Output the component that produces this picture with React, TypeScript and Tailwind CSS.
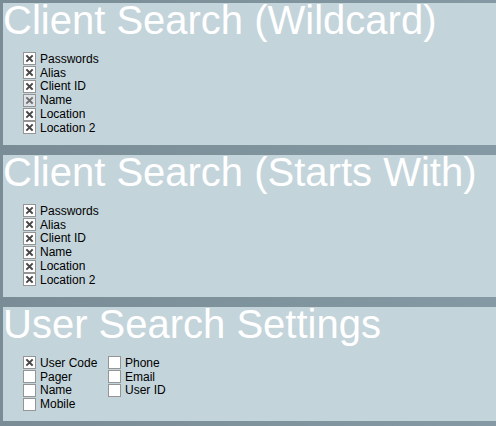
import React from 'react';

type Item = { label: string; checked: boolean; dim?: boolean };

function Box({ checked, dim }: { checked: boolean; dim?: boolean }) {
  return (
    <span
      className={`flex h-[13px] w-[13px] shrink-0 items-center justify-center border border-[#959595] ${
        dim ? 'bg-[#dfe4e7]' : 'bg-white'
      }`}
    >
      {checked && (
        <svg width="9" height="9" viewBox="0 0 9 9">
          <path
            d="M2 2 L7 7 M7 2 L2 7"
            stroke={dim ? '#707070' : '#474747'}
            strokeWidth="1.9"
            strokeLinecap="square"
          />
        </svg>
      )}
    </span>
  );
}

function Row({ item }: { item: Item }) {
  return (
    <label className="flex h-[13.8px] items-center gap-[4px]">
      <Box checked={item.checked} dim={item.dim} />
      <span className="text-[12px] leading-none text-black">{item.label}</span>
    </label>
  );
}

function Panel({ title, height, children }: { title: string; height: string; children: React.ReactNode }) {
  return (
    <section className={`${height} bg-[#c4d4db]`}>
      <h2 className="whitespace-nowrap text-[40px] leading-[34px] text-white">{title}</h2>
      <div className="ml-[20px] mt-[15px]">{children}</div>
    </section>
  );
}

const clientFields: Item[] = [
  { label: 'Passwords', checked: true },
  { label: 'Alias', checked: true },
  { label: 'Client ID', checked: true },
  { label: 'Name', checked: true },
  { label: 'Location', checked: true },
  { label: 'Location 2', checked: true },
];

const userCol1: Item[] = [
  { label: 'User Code', checked: true },
  { label: 'Pager', checked: false },
  { label: 'Name', checked: false },
  { label: 'Mobile', checked: false },
];

const userCol2: Item[] = [
  { label: 'Phone', checked: false },
  { label: 'Email', checked: false },
  { label: 'User ID', checked: false },
];

export default function App() {
  return (
    <div
      className="flex h-[426px] w-[496px] flex-col gap-[10px] overflow-hidden bg-gradient-to-r from-[#7a8d97] to-[#8499a3] pl-[3px] pt-[3px]"
      style={{ fontFamily: '"Liberation Sans", Arial, sans-serif' }}
    >
      <Panel title="Client Search (Wildcard)" height="h-[142px]">
        {clientFields.map((f) => (
          <Row key={f.label} item={{ ...f, dim: f.label === 'Name' }} />
        ))}
      </Panel>
      <Panel title="Client Search (Starts With)" height="h-[142px]">
        {clientFields.map((f) => (
          <Row key={f.label} item={f} />
        ))}
      </Panel>
      <Panel title="User Search Settings" height="h-[114px]">
        <div className="flex">
          <div className="w-[85px]">
            {userCol1.map((f) => (
              <Row key={f.label} item={f} />
            ))}
          </div>
          <div>
            {userCol2.map((f) => (
              <Row key={f.label} item={f} />
            ))}
          </div>
        </div>
      </Panel>
    </div>
  );
}
